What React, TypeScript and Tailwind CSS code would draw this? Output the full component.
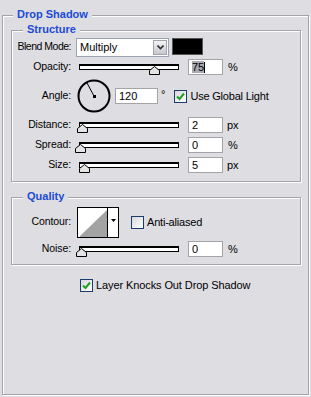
import type { ReactNode } from 'react';

const font = { fontFamily: '"Liberation Sans", Arial, sans-serif' };

function Legend({ children, left }: { children: ReactNode; left: string }) {
  return (
    <div className={`absolute -top-[8px] ${left} px-1 bg-[#dedde2] text-[11px] leading-[13px] font-bold text-[#1a4bd6]`}>
      {children}
    </div>
  );
}

function Slider({ pos }: { pos: number }) {
  return (
    <div className="relative w-[104px] h-[20px] flex items-center">
      <div className="ml-[3px] w-[100px] h-[6px] border border-black border-t-2 bg-white" />
      <svg className="absolute top-[9px]" style={{ left: pos }} width="11" height="9" viewBox="0 0 11 9">
        <polygon points="0.5,8.5 0.5,4.5 5.5,0.5 10.5,4.5 10.5,8.5" fill="#e4e4e4" stroke="#000" />
      </svg>
    </div>
  );
}

function NumInput({ value, w = 'w-[35px]', selected }: { value: string; w?: string; selected?: boolean }) {
  return (
    <div className={`${w} h-[16px] bg-white border border-[#a4a4a8] flex items-center pl-[3px] text-[11px]`}>
      {selected ? (
        <>
          <span className="bg-[#a9a9b3] leading-[12px]">{value}</span>
          <span className="w-px h-[11px] bg-black" />
        </>
      ) : (
        value
      )}
    </div>
  );
}

function Check({ checked }: { checked: boolean }) {
  return (
    <div className="w-[13px] h-[13px] border border-[#1c3c6b] bg-gradient-to-br from-[#d8d8dc] to-white flex items-center justify-center">
      {checked && (
        <svg width="9" height="9" viewBox="0 0 9 9">
          <path d="M1 4.5 L3.5 7 L8 1.5" fill="none" stroke="#22a022" strokeWidth="2" />
        </svg>
      )}
    </div>
  );
}

function Row({ label, h = 'h-[20px]', tight, children }: { label: string; h?: string; tight?: boolean; children: ReactNode }) {
  return (
    <div className={`flex items-center ${h}`}>
      <div className={`w-[59px] shrink-0 mr-[5px] flex justify-end whitespace-nowrap text-[10.5px] ${tight ? 'tracking-[-0.5px]' : 'tracking-[-0.1px]'}`}>{label}</div>
      {children}
    </div>
  );
}

const etched = 'border border-[#a3a3a9] shadow-[inset_1px_1px_0_#fff,1px_1px_0_#fff]';

export default function App() {
  return (
    <div className="w-[311px] h-[397px] bg-[#dedde2] overflow-hidden pt-[15px] text-black" style={font}>
      <div className={`relative ml-[2px] w-[307px] h-[380px] ${etched}`}>
        <Legend left="left-[10px]">Drop Shadow</Legend>

        <div className={`relative ml-[8px] mt-[14px] w-[290px] h-[152px] pt-[6px] ${etched}`}>
          <Legend left="left-[11px]">Structure</Legend>

          <Row label="Blend Mode:" tight>
            <div className="flex items-start">
              <div className="w-[93px] h-[19px] bg-white border border-[#9aa3b4] flex items-center">
                <span className="flex-1 pl-[3px] text-[11px]">Multiply</span>
                <div className="w-[14px] h-[15px] mr-px bg-gradient-to-b from-[#f4f4f6] to-[#c6c6cc] border border-[#a0a4b0] flex items-center justify-center">
                  <svg width="7" height="5" viewBox="0 0 7 5">
                    <path d="M0.5 0.5 L3.5 3.5 L6.5 0.5" fill="none" stroke="#333" strokeWidth="1.6" />
                  </svg>
                </div>
              </div>
              <div className="ml-[3px] w-[31px] h-[17px] bg-black border border-[#555]" />
            </div>
          </Row>

          <Row label="Opacity:">
            <Slider pos={73} />
            <div className="ml-[8px]"><NumInput value="75" selected /></div>
            <span className="ml-[5px] text-[11px]">%</span>
          </Row>

          <Row label="Angle:" h="h-[38px]">
            <svg className="ml-[1px]" width="34" height="34" viewBox="0 0 34 34">
              <circle cx="17" cy="17" r="15.5" fill="none" stroke="#000" strokeWidth="2" />
              <line x1="17" y1="17" x2="10" y2="4" stroke="#000" strokeWidth="1" />
              <rect x="16" y="16" width="3" height="3" fill="#000" />
            </svg>
            <div className="ml-[4px]"><NumInput value="120" w="w-[43px]" /></div>
            <span className="ml-[3px] text-[11px] self-start mt-[9px]">°</span>
            <div className="ml-[9px]"><Check checked /></div>
            <span className="ml-[3px] text-[11px] tracking-[-0.2px]">Use Global Light</span>
          </Row>

          <Row label="Distance:">
            <Slider pos={1} />
            <div className="ml-[8px]"><NumInput value="2" /></div>
            <span className="ml-[4px] text-[11px]">px</span>
          </Row>

          <Row label="Spread:">
            <Slider pos={-1} />
            <div className="ml-[8px]"><NumInput value="0" /></div>
            <span className="ml-[5px] text-[11px]">%</span>
          </Row>

          <Row label="Size:">
            <Slider pos={3} />
            <div className="ml-[8px]"><NumInput value="5" /></div>
            <span className="ml-[4px] text-[11px]">px</span>
          </Row>
        </div>

        <div className={`relative ml-[8px] mt-[15px] w-[290px] h-[68px] pt-[6px] ${etched}`}>
          <Legend left="left-[11px]">Quality</Legend>

          <Row label="Contour:" h="h-[36px]">
            <div className="ml-[1px] w-[42px] h-[31px] bg-white border border-black flex">
              <svg width="29" height="29" viewBox="0 0 29 29">
                <polygon points="2,28 29,2 29,29 2,29" fill="#a3a3a3" />
              </svg>
              <div className="w-[11px] h-full border-l border-black flex justify-center pt-[11px]">
                <svg width="5" height="3" viewBox="0 0 5 3">
                  <polygon points="0,0 5,0 2.5,3" fill="#000" />
                </svg>
              </div>
            </div>
            <div className="ml-[12px]"><Check checked={false} /></div>
            <span className="ml-[3px] text-[11px] tracking-[-0.2px]">Anti-aliased</span>
          </Row>

          <Row label="Noise:" h="h-[18px]">
            <Slider pos={0} />
            <div className="ml-[8px]"><NumInput value="0" /></div>
            <span className="ml-[5px] text-[11px]">%</span>
          </Row>
        </div>

        <div className="flex items-center h-[20px] mt-[10px] ml-[77px]">
          <Check checked />
          <span className="ml-[3px] text-[11px] tracking-[-0.1px]">Layer Knocks Out Drop Shadow</span>
        </div>
      </div>
    </div>
  );
}
